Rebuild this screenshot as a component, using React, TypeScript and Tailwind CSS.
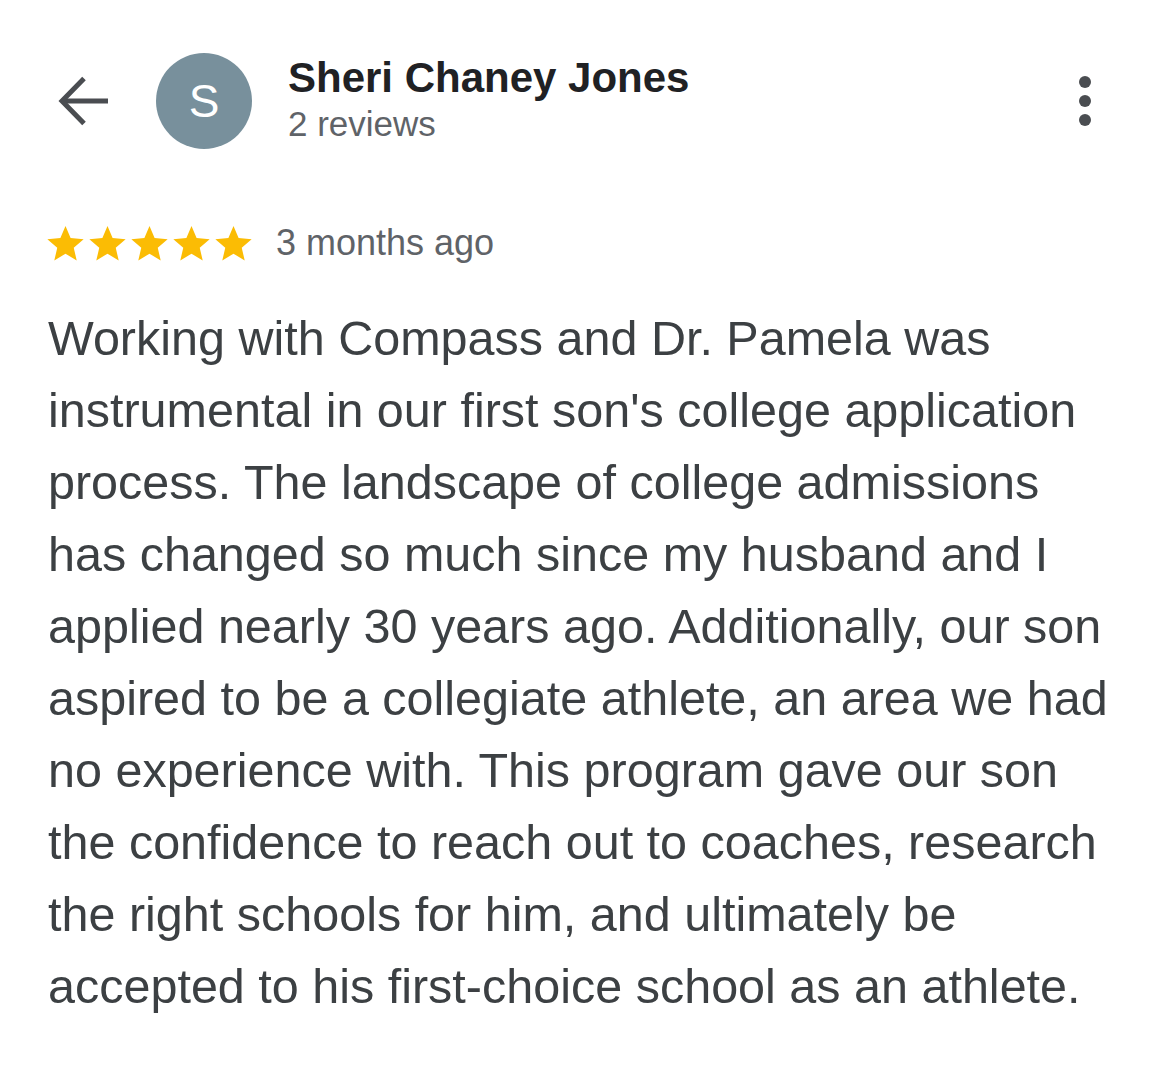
import React from "react";

const Star = () => (
  <svg width="37" height="35" viewBox="2 2 20 19.3">
    <path fill="#fbbc04" d="M12 17.27L18.18 21l-1.64-7.03L22 9.24l-7.19-.61L12 2 9.19 8.63 2 9.24l5.46 4.73L5.82 21z" />
  </svg>
);

const lines = [
  "Working with Compass and Dr. Pamela was",
  "instrumental in our first son's college application",
  "process. The landscape of college admissions",
  "has changed so much since my husband and I",
  "applied nearly 30 years ago. Additionally, our son",
  "aspired to be a collegiate athlete, an area we had",
  "no experience with. This program gave our son",
  "the confidence to reach out to coaches, research",
  "the right schools for him, and ultimately be",
  "accepted to his first-choice school as an athlete.",
];

export default function App() {
  return (
    <div className="w-[1170px] h-[1080px] bg-white" style={{ fontFamily: '"Liberation Sans", Arial, sans-serif' }}>
      <div className="flex items-center pt-[53px] pl-[58px] pr-[79px]">
        <svg width="52" height="52" viewBox="0 0 52 52" className="shrink-0">
          <g fill="none" stroke="#4a4d51" strokeWidth="5" strokeLinecap="butt" strokeLinejoin="miter">
            <path d="M50 26H5" />
            <path d="M26 3.5L4 26l22 22.5" />
          </g>
        </svg>
        <div className="ml-[46px] w-[96px] h-[96px] rounded-full bg-[#78909c] flex items-center justify-center text-white text-[46px] shrink-0">
          S
        </div>
        <div className="ml-[36px] flex-1 flex flex-col -mt-[2px]">
          <div className="text-[42px] font-bold text-[#202124] leading-[48px]">Sheri Chaney Jones</div>
          <div className="text-[35px] text-[#5f6368] leading-[44px]">2 reviews</div>
        </div>
        <div className="flex flex-col gap-[7px] items-center">
          <div className="w-[12px] h-[12px] rounded-full bg-[#4a4d51]" />
          <div className="w-[12px] h-[12px] rounded-full bg-[#4a4d51]" />
          <div className="w-[12px] h-[12px] rounded-full bg-[#4a4d51]" />
        </div>
      </div>
      <div className="flex items-center pl-[47px] mt-[67px]">
        <div className="flex gap-[5px]">
          <Star />
          <Star />
          <Star />
          <Star />
          <Star />
        </div>
        <div className="ml-[24px] text-[36px] text-[#5f6368]">3 months ago</div>
      </div>
      <div className="pl-[48px] mt-[32px] text-[48.5px] leading-[72px] text-[#3c4043] whitespace-nowrap">
        {lines.map((l, i) => (
          <div key={i}>{l}</div>
        ))}
      </div>
    </div>
  );
}
